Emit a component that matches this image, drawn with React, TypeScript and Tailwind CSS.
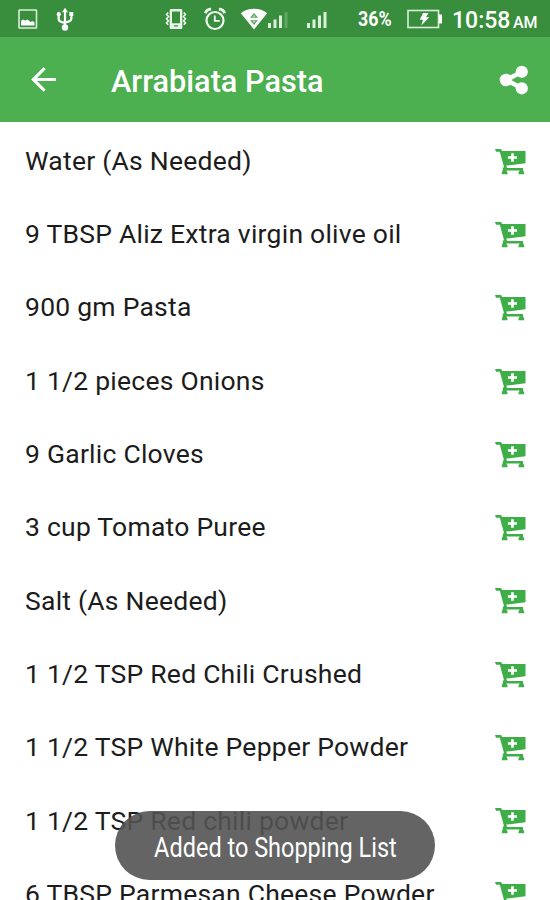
const ingredients = [
  "Water (As Needed)",
  "9 TBSP Aliz Extra virgin olive oil",
  "900 gm Pasta",
  "1 1/2 pieces Onions",
  "9 Garlic Cloves",
  "3 cup Tomato Puree",
  "Salt (As Needed)",
  "1 1/2 TSP Red Chili Crushed",
  "1 1/2 TSP White Pepper Powder",
  "1 1/2 TSP Red chili powder",
  "6 TBSP Parmesan Cheese Powder",
];

function PictureIcon() {
  return (
    <svg className="w-5 h-5 shrink-0" viewBox="0 0 20 20">
      <rect x="1" y="1" width="17.5" height="18" rx="0.5" fill="none" stroke="#d9efda" strokeWidth="1.6" />
      <path d="M3 16.500v-4.500l2-1.500 2 1 2.500-1 3 2.500 2-1 2 1.500v3z" fill="#fff" />
    </svg>
  );
}

function UsbIcon() {
  return (
    <svg className="w-[18px] h-6 shrink-0" viewBox="0 0 18 24" fill="none" stroke="#fff" strokeWidth="2.2">
      <path d="M9 3v17M2.600 7v4.500q0 3 3.400 3.600l3 .9M15.400 7v4q0 3-3 3.600L9 15.500" />
      <path d="M9 .8l3 4.400H6z" fill="#fff" stroke="none" />
      <circle cx="9" cy="20.5" r="3.2" fill="#fff" stroke="none" />
      <circle cx="2.8" cy="7.2" r="2.1" fill="#fff" stroke="none" />
      <path d="M13.300 5h4v4h-4z" fill="#fff" stroke="none" />
    </svg>
  );
}

function VibrateIcon() {
  return (
    <svg className="w-[22px] h-[22px] shrink-0" viewBox="0 0 22 22" fill="none" stroke="#e6f5e6">
      <path
        fillRule="evenodd"
        d="M6 1h10a1.300 1.300 0 0 1 1.300 1.300v17.400A1.300 1.300 0 0 1 16 21H6a1.300 1.300 0 0 1-1.300-1.300V2.300A1.300 1.300 0 0 1 6 1zM7 3.500v11.700h8V3.500zM9 17.300v1.300h4v-1.300z"
        fill="#e6f5e6"
        stroke="none"
      />
      <path d="M3.300 4.500l-1.800 2 2 2-2 2.200 2 2.200-2 2 1.800 1.800M18.700 4.500l1.800 2-2 2 2 2.200-2 2.200 2 2-1.800 1.800" strokeWidth="1.6" />
    </svg>
  );
}

function AlarmIcon() {
  return (
    <svg className="w-[22px] h-6 shrink-0" viewBox="0 0 22 24" fill="none" stroke="#f0faf0">
      <circle cx="11" cy="13.5" r="8.5" strokeWidth="2.2" />
      <path d="M10.800 8.500v5.300h5" strokeWidth="1.8" />
      <path d="M1.300 6.200q1.500-4 5.800-4M20.700 6.200q-1.500-4-5.800-4" strokeWidth="2.8" />
    </svg>
  );
}

function WifiIcon() {
  return (
    <svg className="w-7 h-[22px] shrink-0" viewBox="0 0 28 22">
      <path d="M14 21.500L.8 5.200Q6.500.8 14 .8t13.200 4.400z" fill="#fff" />
      <path d="M14 5l4 4.800h-8zM14 17l-4-4.800h8z" fill="#5fa863" />
      <path d="M14 7.500v1.800M14 12.800v1.600" stroke="#fff" strokeWidth="1" />
    </svg>
  );
}

function SignalIcon({ weak }: { weak?: boolean }) {
  return (
    <svg className="w-5 h-[17px] shrink-0" viewBox="0 0 20 17" fill="#d9efda">
      <path d="M0 12h3v5H0zM5.500 8.500h3V17h-3z" />
      <path d="M11 4.500h3V17h-3z" />
      <path d="M16.500 1h3v16h-3z" opacity={weak ? 0.25 : 1} />
    </svg>
  );
}

function BatteryIcon() {
  return (
    <svg className="w-9 h-5 shrink-0" viewBox="0 0 36 20">
      <rect x="1" y="1.5" width="30.5" height="17" fill="none" stroke="#d9efda" strokeWidth="1.6" />
      <path d="M32 5.500h3v9h-3z" fill="#fff" />
      <path d="M16 4h5.500l-2.500 4.300h3.300L14.300 16.500l1.700-5.700h-3.200z" fill="#fff" />
    </svg>
  );
}

function BackIcon() {
  return (
    <svg className="w-[37px] h-[37px]" viewBox="0 0 24 24" fill="#fff">
      <path d="M20 11H7.830l5.590-5.590L12 4l-8 8 8 8 1.410-1.410L7.830 13H20v-2z" />
    </svg>
  );
}

function ShareIcon() {
  return (
    <svg className="w-[30px] h-[30px]" viewBox="0 0 30 30" fill="#fff">
      <path d="M22.500 7L7 15l15.500 8" fill="none" stroke="#fff" strokeWidth="4.4" />
      <circle cx="22.8" cy="6.8" r="6.1" />
      <circle cx="7" cy="15" r="6.3" />
      <circle cx="22.8" cy="23.3" r="6.1" />
    </svg>
  );
}

function CartPlusIcon() {
  return (
    <svg className="w-8 h-7 shrink-0" viewBox="0 0 32 28" fill="#3fae49">
      <path d="M1 1h5.500q1.200 0 1.600 2h23.400v12.200L12.300 17.600l.7 2.400H29v2.400H8.800V20l1.200-1L5.800 3.700H2z" />
      <path d="M8.800 22h3.400l1.300 2.700v1.500H7.800v-1.500zM25.800 22h3.200l1.200 2.700v1.500h-5.700v-1.500z" />
      <path d="M17.100 5.300h2.700v3H23v2.500h-3.200v3h-2.700v-3h-3.200V8.300h3.200z" fill="#fff" />
    </svg>
  );
}

export default function App() {
  return (
    <div className="relative w-[550px] h-[900px] overflow-hidden bg-white font-['Roboto',sans-serif] text-[#1c1c1c]">
      {/* Status bar */}
      <div className="flex items-center h-[37px] pl-[18px] bg-[#388e3c] text-white">
        <PictureIcon />
        <div className="flex ml-[18px]">
          <UsbIcon />
        </div>
        <div className="flex items-center ml-[91px]">
          <VibrateIcon />
          <div className="flex ml-[17px]">
            <AlarmIcon />
          </div>
          <div className="flex ml-[14px]">
            <WifiIcon />
          </div>
          <div className="flex mt-[2px]">
            <SignalIcon weak />
          </div>
          <div className="flex ml-[19px] mt-[2px]">
            <SignalIcon />
          </div>
        </div>
        <div className="w-[35px] ml-[31px] mt-[2px] text-[20.5px] font-bold leading-none whitespace-nowrap">
          <span className="inline-block origin-left scale-x-[0.87]">36%</span>
        </div>
        <div className="flex ml-[14px] mt-px">
          <BatteryIcon />
        </div>
        <div className="flex items-baseline ml-[9px] mt-[3px] leading-none font-medium whitespace-nowrap">
          <span className="w-[61px] text-[23px]">10:58</span>
          <span className="text-[16px]">AM</span>
        </div>
      </div>

      {/* App bar */}
      <header className="flex items-center h-[85px] pl-[25px] pr-[21px] bg-[#4caf50] text-white">
        <BackIcon />
        <h1 className="ml-[49px] mt-[6px] text-[30.7px] leading-none font-medium whitespace-nowrap">Arrabiata Pasta</h1>
        <div className="ml-auto">
          <ShareIcon />
        </div>
      </header>

      {/* Ingredients */}
      <ul className="pt-px">
        {ingredients.map((item) => (
          <li key={item} className="flex items-center justify-between h-[73.3px] pl-[25px] pr-[24px]">
            <span className="mt-[3px] text-[26.5px] leading-none tracking-[0.24px] whitespace-nowrap">{item}</span>
            <div className="mt-[4px]">
              <CartPlusIcon />
            </div>
          </li>
        ))}
      </ul>

      {/* Toast */}
      <div className="absolute left-[115px] top-[811px] flex items-center justify-center w-[320px] h-[69px] pt-[5px] rounded-full bg-[#535353]/90 text-white">
        <span className="text-[27px] leading-none whitespace-nowrap scale-x-[0.87]">Added to Shopping List</span>
      </div>
    </div>
  );
}
